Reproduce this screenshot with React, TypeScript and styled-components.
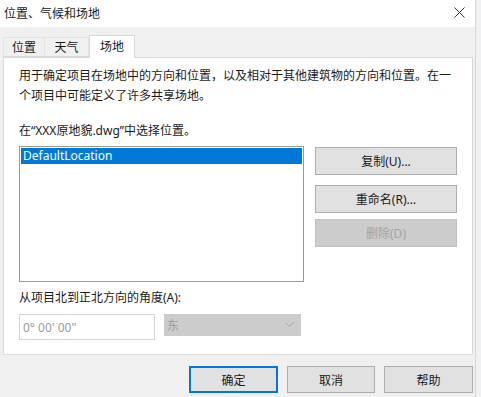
import React from "react";
import styled, { createGlobalStyle } from "styled-components";

const GlobalStyle = createGlobalStyle`
  html, body {
    margin: 0;
    padding: 0;
    background: #eef2f4;
  }
  body {
    font-family: "Noto Sans", "Noto Sans CJK SC", sans-serif;
    font-size: 12px;
    color: #1a1a1a;
  }
`;

const Window = styled.div`
  width: 476px;
  height: 397px;
  background: #f0f0f0;
  border-right: 1px solid #c6dde6;
  display: flex;
  flex-direction: column;
  box-sizing: border-box;
`;

const TitleBar = styled.div`
  height: 27px;
  background: #ffffff;
  display: flex;
  align-items: center;
  justify-content: space-between;
  padding: 0 10px 2px 4px;
  box-sizing: border-box;
`;

const Title = styled.span`
  font-size: 12px;
  color: #1a1a1a;
`;

const Body = styled.div`
  padding: 8px 2px 0 3px;
  display: flex;
  flex-direction: column;
`;

const TabStrip = styled.div`
  display: flex;
  align-items: flex-end;
  height: 22px;
  position: relative;
  z-index: 1;
`;

const Tab = styled.div<{ $active?: boolean; $w: number }>`
  width: ${(p) => p.$w}px;
  height: ${(p) => (p.$active ? 23 : 20)}px;
  box-sizing: border-box;
  display: flex;
  align-items: center;
  justify-content: center;
  background: ${(p) => (p.$active ? "#ffffff" : "#f0f0f0")};
  border: 1px solid ${(p) => (p.$active ? "#d9d9d9" : "#e4e4e4")};
  border-bottom: ${(p) => (p.$active ? "none" : "1px solid #d9d9d9")};
  margin-bottom: ${(p) => (p.$active ? "-1px" : "0")};
  margin-left: ${(p) => (p.$active ? "0" : "-1px")};
  padding-bottom: ${(p) => (p.$active ? "2px" : "0")};
  font-size: 12px;
  &:first-child {
    margin-left: 0;
  }
`;

const Panel = styled.div`
  width: 470px;
  height: 298px;
  box-sizing: border-box;
  background: #ffffff;
  border: 1px solid #d9d9d9;
  padding: 8px 0 0 15px;
  display: flex;
  flex-direction: column;
`;

const Paragraph = styled.p`
  margin: 0;
  font-size: 12px;
  line-height: 20px;
  width: 438px;
`;

const Label = styled.div<{ $top: number }>`
  margin-top: ${(p) => p.$top}px;
  font-size: 12px;
  line-height: 20px;
`;

const ListRow = styled.div`
  display: flex;
  gap: 11px;
  margin-top: 5px;
`;

const ListBox = styled.div`
  width: 285px;
  height: 136px;
  box-sizing: border-box;
  border: 1px solid #9a9a9a;
  padding: 1px;
  background: #fff;
`;

const ListItem = styled.div<{ $selected?: boolean }>`
  height: 16px;
  line-height: 16px;
  padding-left: 2px;
  font-size: 12px;
  background: ${(p) => (p.$selected ? "#0078d7" : "transparent")};
  color: ${(p) => (p.$selected ? "#ffffff" : "#000")};
`;

const SideButtons = styled.div`
  display: flex;
  flex-direction: column;
  padding-top: 1px;
`;

const Button = styled.div<{ $w?: number; $h?: number; $disabled?: boolean; $default?: boolean; $gap?: number }>`
  width: ${(p) => p.$w ?? 142}px;
  height: ${(p) => p.$h ?? 28}px;
  margin-top: ${(p) => p.$gap ?? 0}px;
  box-sizing: border-box;
  display: flex;
  align-items: center;
  justify-content: center;
  font-size: 12px;
  background: ${(p) => (p.$disabled ? "#cccccc" : "#e1e1e1")};
  color: ${(p) => (p.$disabled ? "#a3a3a3" : "#1a1a1a")};
  border: 1px solid
    ${(p) => (p.$default ? "#0078d7" : p.$disabled ? "#bfbfbf" : "#adadad")};
  box-shadow: ${(p) => (p.$default ? "inset 0 0 0 1px #0078d7" : "none")};
`;

const InputRow = styled.div`
  display: flex;
  align-items: flex-start;
  gap: 9px;
  margin-top: 6px;
`;

const TextInput = styled.div`
  width: 136px;
  height: 26px;
  box-sizing: border-box;
  border: 1px solid #d5d5d5;
  background: #fff;
  color: #9a9a9a;
  font-size: 12px;
  display: flex;
  align-items: center;
  padding-left: 3px;
`;

const Combo = styled.div`
  width: 137px;
  height: 22px;
  box-sizing: border-box;
  background: #cccccc;
  border: 1px solid #cccccc;
  color: #9d9d9d;
  font-size: 12px;
  display: flex;
  align-items: center;
  justify-content: space-between;
  padding: 0 6px 0 2px;
`;

const Footer = styled.div`
  display: flex;
  justify-content: flex-end;
  gap: 9px;
  padding: 11px 0 0 0;
`;

function CloseIcon() {
  return (
    <svg width="11" height="11" viewBox="0 0 11 11">
      <path d="M0.5 0.5 L10.5 10.5 M10.5 0.5 L0.5 10.5" stroke="#333" strokeWidth="1" fill="none" />
    </svg>
  );
}

function Chevron() {
  return (
    <svg width="9" height="6" viewBox="0 0 9 6">
      <path d="M0.5 0.5 L4.5 4.5 L8.5 0.5" stroke="#a8a8a8" strokeWidth="1" fill="none" />
    </svg>
  );
}

export default function App() {
  return (
    <Window>
      <GlobalStyle />
      <TitleBar>
        <Title>位置、气候和场地</Title>
        <CloseIcon />
      </TitleBar>
      <Body>
        <TabStrip>
          <Tab $w={42}>位置</Tab>
          <Tab $w={45}>天气</Tab>
          <Tab $w={46} $active>
            场地
          </Tab>
        </TabStrip>
        <Panel>
          <Paragraph>
            用于确定项目在场地中的方向和位置，以及相对于其他建筑物的方向和位置。在一个项目中可能定义了许多共享场地。
          </Paragraph>
          <Label $top={15}>在“XXX原地貌.dwg”中选择位置。</Label>
          <ListRow>
            <ListBox>
              <ListItem $selected>DefaultLocation</ListItem>
            </ListBox>
            <SideButtons>
              <Button>复制(U)...</Button>
              <Button $gap={10}>重命名(R)...</Button>
              <Button $gap={6} $disabled>
                删除(D)
              </Button>
            </SideButtons>
          </ListRow>
          <Label $top={6}>从项目北到正北方向的角度(A):</Label>
          <InputRow>
            <TextInput>0° 00' 00"</TextInput>
            <Combo>
              <span>东</span>
              <Chevron />
            </Combo>
          </InputRow>
        </Panel>
        <Footer>
          <Button $w={89} $h={27} $default>
            确定
          </Button>
          <Button $w={88} $h={27}>
            取消
          </Button>
          <Button $w={89} $h={27}>
            帮助
          </Button>
        </Footer>
      </Body>
    </Window>
  );
}
